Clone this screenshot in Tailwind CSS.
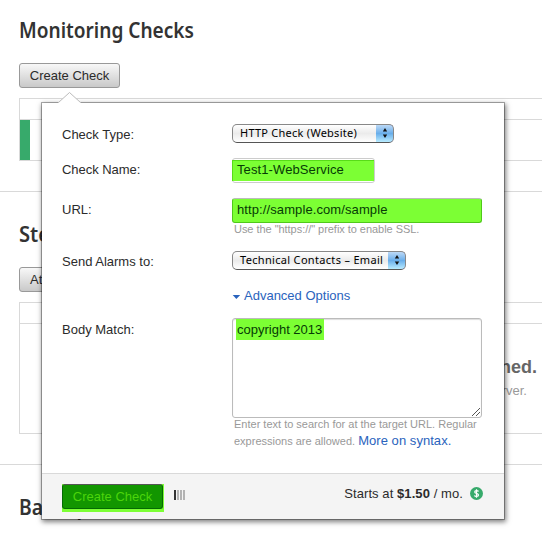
<!DOCTYPE html>
<html lang="en">
<head>
<meta charset="utf-8">
<title>Monitoring Checks</title>
<script src="https://cdn.jsdelivr.net/npm/@tailwindcss/browser@4"></script>
</head>
<body class="bg-white">
<div class="relative h-[538px] w-[542px] overflow-hidden bg-white font-['Liberation_Sans',Arial,sans-serif] text-[13px] leading-5 text-[#2b2b2b]">

  <section class="h-[192px] border-b border-[#d9d9d9] pl-[19px] pt-[15px]">
    <h1 class="h-[30px] w-max origin-left scale-x-[.908] whitespace-nowrap font-['Noto_Sans',sans-serif] text-[21px] font-semibold leading-[30px] text-[#333]">Monitoring Checks</h1>
    <button class="mt-[18px] block h-[25px] w-[101px] rounded-[3px] border border-[#999] bg-linear-to-b from-[#f8f8f8] to-[#c9c9c9] leading-[23px]">Create Check</button>
    <div class="mt-[10px] h-[63px] border-y border-l border-[#d9d9d9]">
      <div class="h-[21px] border-b border-[#d9d9d9]"></div>
      <div class="h-10 w-[10px] bg-[#37aa6b]"></div>
    </div>
  </section>

  <section class="h-[273px] border-b border-[#d9d9d9] pl-[19px] pt-[27px]">
    <h1 class="h-[30px] w-max origin-left scale-x-[.96] whitespace-nowrap font-['Noto_Sans',sans-serif] text-[21px] font-semibold leading-[30px] text-[#333]">Ste</h1>
    <button class="mt-[18px] block h-[25px] w-[101px] rounded-[3px] border border-[#999] bg-linear-to-b from-[#f8f8f8] to-[#c9c9c9] pl-[10px] text-left leading-[23px]">At</button>
    <div class="mt-[10px] h-[132px] border-y border-l border-[#d9d9d9]">
      <div class="h-[21px] border-b border-[#d9d9d9]"></div>
      <div class="flex flex-col items-end pt-[31px]">
        <div class="pr-[5px] text-[18px] font-bold leading-6 text-[#666]">ned.</div>
        <div class="pr-[15px] pt-[2px] text-[13px] leading-5 text-[#999]">rver.</div>
      </div>
    </div>
  </section>

  <section class="pl-[19px] pt-[27px]">
    <h1 class="h-[30px] w-max origin-left scale-x-[.92] whitespace-nowrap font-['Noto_Sans',sans-serif] text-[21px] font-semibold leading-[30px] text-[#333]">Backup</h1>
  </section>

  <div class="absolute left-[42px] top-[103px] flex h-[416px] w-[462px] flex-col bg-white shadow-[0_0_0_1px_rgba(0,0,0,0.3),1px_2px_5px_1px_rgba(0,0,0,0.5)]">
    <svg class="absolute left-[16px] top-[-11px]" width="23" height="12" viewBox="0 0 23 12"><path d="M0 11L11.5 0L23 11V12H0Z" fill="#fff"/><path d="M0.5 10.5L11.5 .5L22.5 10.5" fill="none" stroke="#bbb" stroke-width="1"/></svg>
    <div class="flex grow flex-col pl-5 pt-[22px]">
      <div class="flex h-[35px]">
        <div class="w-[170px]">Check Type:</div>
        <div class="mt-[-1px] flex h-[19px] w-[162px] overflow-hidden rounded-[5px] border border-[#888] border-b-[#555] bg-linear-to-b from-[#fff] via-[#ebebeb] to-[#fff]">
          <span class="grow whitespace-nowrap pl-[7px] font-['Noto_Sans',sans-serif] text-[11px] leading-[16px] tracking-[0.25px] text-black">HTTP Check (Website)</span>
          <span class="-my-px -mr-px flex w-[18px] justify-center rounded-r-[5px] border border-l-0 border-[#36538f] bg-linear-to-b from-[#bcd9f6] via-[#69aeea] to-[#b9ecff]"><svg class="mt-[2px]" width="8" height="13" viewBox="0 0 8 13"><path d="M4 1L6.2 4.5H1.8ZM4 11L1.8 7.5H6.2Z" fill="#111"/></svg></span>
        </div>
      </div>
      <div class="flex h-10">
        <div class="w-[170px] tracking-[-0.05px]">Check Name:</div>
        <div class="mt-[-2px] h-[25px] w-[143px] rounded-[3px] border border-[#ccc] pt-px">
          <div class="ml-[-1px] h-[21px] bg-[#7cff34] pl-[5px] leading-[20px] tracking-[0.1px] text-[#063b06] shadow-[inset_1px_1px_0_#58dc18]">Test1-WebService</div>
        </div>
      </div>
      <div class="flex h-[52px]">
        <div class="w-[170px]">URL:</div>
        <div>
          <div class="mt-[-2px] h-[25px] w-[250px] rounded-[3px] border border-[#4fc91a] border-t-[#bbb] bg-[#7cff34] pl-[4px] leading-[22px] tracking-[0.1px] text-[#063b06]">http://sample.com/sample</div>
          <div class="pl-[2px] text-[11px] leading-[13px] tracking-[-0.04px] text-[#999]">Use the "https://" prefix to enable SSL.</div>
        </div>
      </div>
      <div class="flex h-[34px]">
        <div class="w-[170px]">Send Alarms to:</div>
        <div class="mt-[-1px] flex h-[19px] w-[174px] overflow-hidden rounded-[5px] border border-[#888] border-b-[#555] bg-linear-to-b from-[#fff] via-[#ebebeb] to-[#fff]">
          <span class="grow whitespace-nowrap pl-[7px] font-['Noto_Sans',sans-serif] text-[11px] leading-[16px] tracking-[0.32px] text-black">Technical Contacts – Email</span>
          <span class="-my-px -mr-px flex w-[18px] justify-center rounded-r-[5px] border border-l-0 border-[#36538f] bg-linear-to-b from-[#bcd9f6] via-[#69aeea] to-[#b9ecff]"><svg class="mt-[2px]" width="8" height="13" viewBox="0 0 8 13"><path d="M4 1L6.2 4.5H1.8ZM4 11L1.8 7.5H6.2Z" fill="#111"/></svg></span>
        </div>
      </div>
      <div class="flex h-[34px] pl-[170px] text-[#2a63bd]">
        <svg class="mt-[9px]" width="12" height="5" viewBox="0 0 12 5"><path d="M.7 0H8.2L4.4 4Z" fill="currentColor"/></svg>
        <span>Advanced Options</span>
      </div>
      <div class="flex">
        <div class="w-[170px]">Body Match:</div>
        <div>
          <div class="relative mt-[-2px] h-[100px] w-[250px] rounded-[3px] border border-[#bbb] pl-[3px] shadow-[inset_0_1px_1px_#ddd]">
            <span class="block h-[21px] w-[88px] whitespace-nowrap bg-[#7cff34] pl-px leading-[22px] text-[#063b06]">copyright 2013</span>
            <svg class="absolute bottom-px right-px" width="8" height="8" viewBox="0 0 8 8"><path d="M0 8L8 0M4 8L8 4" stroke="#555" stroke-width="1"/></svg>
          </div>
          <div class="whitespace-nowrap pl-[2px] text-[11px] leading-[17px] text-[#999]">
            <div class="mt-[-2px]">Enter text to search for at the target URL. Regular</div>
            <div class="-mt-px">expressions are allowed. <span class="text-[13px] tracking-[0.05px] text-[#2a63bd]">More on syntax.</span></div>
          </div>
        </div>
      </div>
    </div>
    <div class="flex h-[46px] shrink-0 border-t border-[#d9d9d9] bg-[#f4f4f4] pl-5">
      <div class="mt-[10px] h-[28px] w-[102px] bg-[#7cff34]">
        <button class="block h-[25px] w-[101px] rounded-[3px] border border-[#056a05] border-t-[#555] bg-[#129600] leading-[22px] text-[#4cd40b]">Create Check</button>
      </div>
      <div class="ml-[10px] mt-4 flex h-[10px] gap-px">
        <i class="w-[2px] bg-[#333]"></i><i class="w-[2px] bg-[#b3b3b3]"></i><i class="w-[2px] bg-[#b3b3b3]"></i><i class="w-[2px] bg-[#b3b3b3]"></i>
      </div>
      <div class="ml-auto mr-[7px] mt-[10px] whitespace-nowrap tracking-[0.08px]">Starts at <b>$1.50</b> / mo.</div>
      <svg class="mr-[21px] mt-[13px]" width="13" height="13" viewBox="0 0 13 13"><circle cx="6.5" cy="6.5" r="6.5" fill="#37aa6b"/><path d="M8.5 4.5C8 3.4 4.7 3.2 4.7 5C4.7 6.7 8.5 6.1 8.5 8C8.5 9.8 5 9.7 4.4 8.4M6.5 2.3V10.7" fill="none" stroke="#fff" stroke-width="1.2"/></svg>
    </div>
  </div>
</div>
</body>
</html>
